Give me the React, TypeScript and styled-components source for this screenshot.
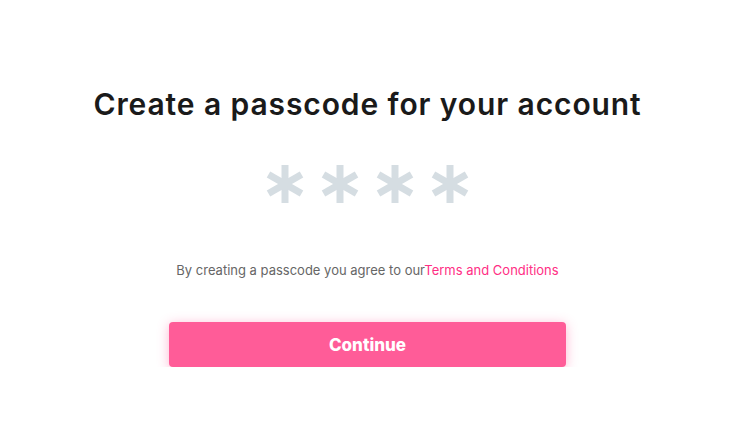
import React from "react";
import styled, {createGlobalStyle} from "styled-components";

const GlobalStyle = createGlobalStyle`
  html, body {
    margin: 0;
    background: #ffffff;
  }
  body {
    font-family: "Inter", "Open Sans", sans-serif;
  }
`

const Star = () => (
	<svg width="38" height="40" viewBox="-19 -20 38 40">
		<g stroke="#d5dde2" strokeWidth="7" strokeLinecap="butt">
			<line x1="0" y1="-19" x2="0" y2="19"/>
			<line x1="-16.5" y1="-9.5" x2="16.5" y2="9.5"/>
			<line x1="-16.5" y1="9.5" x2="16.5" y2="-9.5"/>
		</g>
	</svg>
)

export default function App() {
	return (
		<>
			<GlobalStyle/>
			<Page>
				<Title>Create a passcode for your account</Title>
				<Code>
					<Star/>
					<Star/>
					<Star/>
					<Star/>
				</Code>
				<Agree>
					By creating a passcode you agree to our<TermsLink href="#">Terms and Conditions</TermsLink>
				</Agree>
				<ContinueButton>Continue</ContinueButton>
			</Page>
		</>
	)
}

const Page = styled.div`
  width: 735px;
  display: flex;
  flex-direction: column;
  align-items: center;
  padding-top: 84px;
`
const Title = styled.h1`
  margin: 0;
  font-size: 30px;
  font-weight: 600;
  color: #1a1a1a;
  letter-spacing: 0.9px;
  line-height: 40px;
`
const Code = styled.div`
  display: flex;
  gap: 17px;
  margin-top: 40px;
`
const Agree = styled.p`
  margin: 58px 0 0;
  font-size: 13px;
  color: #666666;
  line-height: 16px;
`
const TermsLink = styled.a`
  color: #ff2e84;
  text-decoration: none;
`
const ContinueButton = styled.button`
  margin-top: 44px;
  width: 397px;
  height: 45px;
  border: none;
  border-radius: 4px;
  background: #ff5c98;
  color: #ffffff;
  font-family: "Inter", sans-serif;
  font-size: 17px;
  font-weight: 800;
  box-shadow: 0 2px 12px rgba(255, 92, 152, 0.45);
  cursor: pointer;
`
